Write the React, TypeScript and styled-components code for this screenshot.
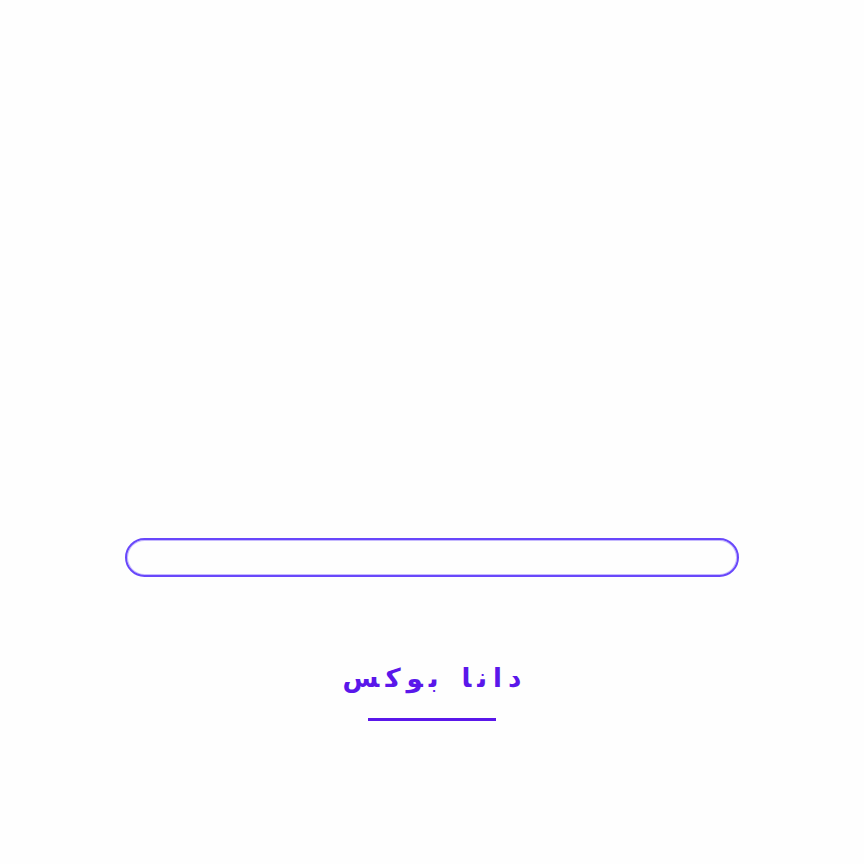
import React from "react";
import styled, { createGlobalStyle } from "styled-components";

const GlobalStyle = createGlobalStyle`
  * { box-sizing: border-box; }
  body { margin: 0; background: #fefefe; }
`;

const Screen = styled.main`
  min-height: 100vh;
  display: flex;
  flex-direction: column;
  align-items: center;
  justify-content: flex-end;
  padding: 0 125px 143px;
`;

const Track = styled.div`
  width: 100%;
  height: 39px;
  border: 2px solid #6847fb;
  border-radius: 20px;
  box-shadow: inset 0 0 0 1px #c5b9fd;
`;

const Brand = styled.h1`
  display: flex;
  gap: 23px;
  margin: 81px 0 20px;
  color: #5a17ea;
  font-family: "DejaVu Sans", sans-serif;
  font-size: 26px;
  font-weight: 700;
  line-height: 40px;
`;

const Word = styled.span`
  display: flex;
  gap: 6px;
`;

const Letter = styled.span`
  white-space: pre;
`;

const Underline = styled.div`
  width: 128px;
  height: 3px;
  background: #5a17ea;
`;

// Browsers ignore letter-spacing in cursive scripts, so each letter is its own
// item; the zero-width joiners keep the initial and final forms.
const brandName = "دانا بوکس";
const brandWords = [
  ["د", "ا", "ن\u200d", "\u200dا"],
  ["ب\u200d", "\u200dو", "ک\u200d", "\u200dس"],
];

export default function App() {
  return (
    <>
      <GlobalStyle />
      <Screen>
        <Track role="progressbar" aria-label={brandName} aria-valuemin={0} aria-valuemax={100} aria-valuenow={0} />
        <Brand lang="fa" dir="rtl" aria-label={brandName}>
          {brandWords.map((letters, w) => (
            <Word key={w}>
              {letters.map((letter, i) => (
                <Letter key={i}>{letter}</Letter>
              ))}
            </Word>
          ))}
        </Brand>
        <Underline />
      </Screen>
    </>
  );
}
